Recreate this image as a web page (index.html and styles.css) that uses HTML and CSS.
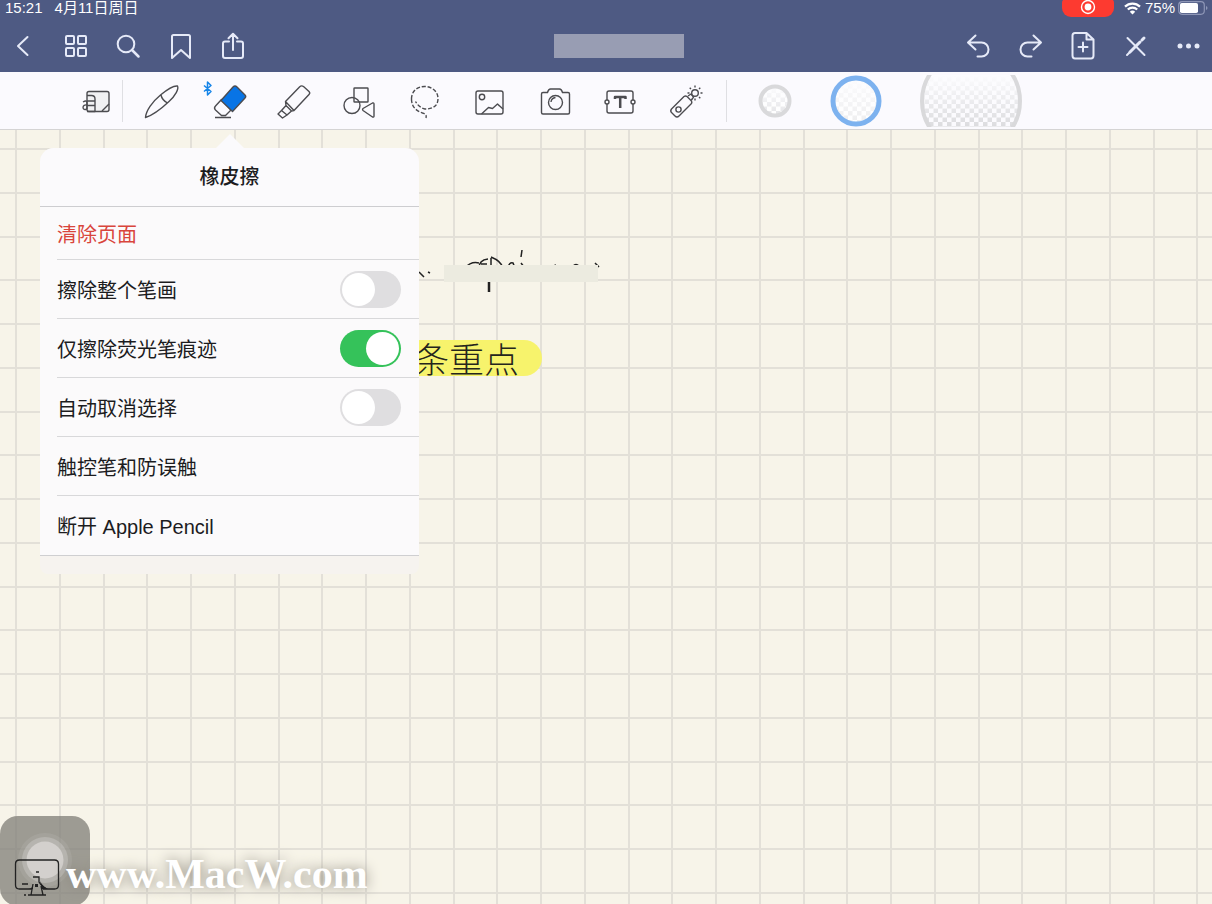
FILE: index.html
```html
<!DOCTYPE html>
<html lang="zh-CN">
<head>
<meta charset="utf-8">
<meta name="viewport" content="width=device-width, initial-scale=1">
<title>笔记</title>
<link rel="stylesheet" href="styles.css">
</head>
<body>
<div class="app">
  <header class="header">
    <div class="status">
      <span>15:21</span>
      <span class="date">4月11日周日</span>
      <span class="rec"><svg width="16" height="16" viewBox="0 0 16 16"><circle cx="8" cy="8" r="6.5" fill="none" stroke="#fff" stroke-width="1.4"/><circle cx="8" cy="8" r="3.4" fill="#fff"/></svg></span>
      <svg width="17" height="13" viewBox="0 0 17 13" fill="none" stroke="#fff" stroke-width="2.2"><path d="M1 4.6a10.7 10.7 0 0 1 15 0M3.8 7.5a6.7 6.7 0 0 1 9.4 0"/><path d="M8.500 12.500L5.800 9.800a3.900 3.900 0 0 1 5.400 0z" fill="#fff" stroke="none"/></svg>
      <span class="pct">75%</span>
      <svg width="30" height="14" viewBox="0 0 30 14"><rect x=".7" y=".7" width="25.600" height="12.600" rx="3.500" fill="none" stroke="#8e96b6" stroke-width="1.200"/><rect x="2" y="2" width="18" height="10" rx="1.800" fill="#fff"/><path d="M28 5v4q1.500-.6 1.500-2T28 5" fill="#8e96b6"/></svg>
    </div>
    <nav class="nav">
      <div class="group">
        <button class="btn" aria-label="返回"><svg class="ic" viewBox="0 0 32 32"><path d="M20.500 7L11 16l9.500 9"/></svg></button>
        <button class="btn" aria-label="缩略图"><svg class="ic" viewBox="0 0 32 32"><rect x="6" y="6" width="8" height="8" rx="1"/><rect x="18" y="6" width="8" height="8" rx="1"/><rect x="6" y="18" width="8" height="8" rx="1"/><rect x="18" y="18" width="8" height="8" rx="1"/></svg></button>
        <button class="btn" aria-label="搜索"><svg class="ic" viewBox="0 0 32 32"><circle cx="14" cy="14" r="8.300"/><path d="M20 20l6.500 6.500" stroke-width="2.500"/></svg></button>
        <button class="btn" aria-label="书签"><svg class="ic" viewBox="0 0 32 32"><path d="M7 28V6.500q0-1.500 1.500-1.500h15q1.500 0 1.500 1.500V28l-9-8z"/></svg></button>
        <button class="btn" aria-label="分享"><svg class="ic" viewBox="0 0 32 32"><path d="M12 11.500H8q-2 0-2 2V26q0 2 2 2h16q2 0 2-2V13.500q0-2-2-2h-4M16 20V4M11.500 8.200L16 3.700l4.500 4.500"/></svg></button>
      </div>
      <div class="title-area"><div class="title"></div></div>
      <div class="group">
        <button class="btn" aria-label="撤销"><svg class="ic" viewBox="0 0 32 32"><path d="M13.500 5.500L6 12.500l7.500 7M6.500 12.500h13a7 7 0 0 1 0 14h-4"/></svg></button>
        <button class="btn" aria-label="重做"><svg class="ic" viewBox="0 0 32 32"><path d="M18.500 5.500l7.500 7-7.500 7M25.500 12.500h-13a7 7 0 0 0 0 14h4"/></svg></button>
        <button class="btn" aria-label="添加页面"><svg class="ic" viewBox="0 0 32 32"><path d="M19.500 3H8Q5.500 3 5.500 5.500v20Q5.500 28.500 8 28.500h16q2.500 0 2.500-3V9.500zM19.500 3v6.500h7M16 12.500v9M11.500 17h9"/></svg></button>
        <button class="btn" aria-label="只读模式"><svg class="ic" viewBox="0 0 32 32"><path d="M7.500 8l17 17"/><path d="M10 22L20 12M22 10l2-2" stroke-width="3"/><path d="M7 25l3-3"/></svg></button>
        <button class="btn" aria-label="更多"><svg class="ic dots" viewBox="0 0 32 32"><circle cx="8" cy="16" r="2.500"/><circle cx="16.500" cy="16" r="2.500"/><circle cx="25" cy="16" r="2.500"/></svg></button>
      </div>
    </nav>
  </header>

  <div class="toolbar">
    <button class="tool" aria-label="放大窗口"><svg viewBox="0 0 44 44"><rect x="13" y="12.500" width="22" height="20" rx="2" fill="#f1f1f3"/><path d="M13 16.500h4.500q3.500 0 3.500 3.500v12.500h-8M13 22h8M28 32l7-7M9 23q4-2.500 4 1v6M13 26c-5-1-5 5-1.500 4.500 1 0 1.500-1 1.500-2M13 26.500h8"/></svg></button>
    <span class="sep"></span>
    <div class="tools">
      <button class="tool" aria-label="钢笔"><svg viewBox="0 0 44 44"><path d="M5.500 38.500C6 32 12 23 20.500 16c6-5 13-9.500 17-9 1.500 3-2 9.500-8.500 15.500C21 30 12 36.500 5.500 38.500zM21 16q1 5 6.500 8"/></svg></button>
      <button class="tool" aria-label="橡皮擦"><svg viewBox="0 0 44 44"><path d="M15.500 20.500l-6 6.500q-2 2 0 4l6 5.500h4l5.500-5.500zM9 38.500h16"/><path d="M27 8q2-2 4 0l8 8q1.500 1.500 0 3L26.500 32.500 15 21.500z" fill="#0874e5"/><path d="M-2 6.500l7 6-3.500 3.500V3L5 6.500-2 12.500" stroke="#1685e8" stroke-width="1.500"/></svg></button>
      <button class="tool" aria-label="荧光笔"><svg viewBox="0 0 44 44"><path d="M32.500 7.500l5.500 5q1.500 1.500 0 3L23 31.500l-8.500-9L28.500 8q2-2 4-.5zM14.500 22.500l.5 4-4.500 5 5.500 4.500 4.500-4 2.500-.5M10.500 31.500L7 35l4.500 4 4.500-3M15 26.500l5.500 5.500"/></svg></button>
      <button class="tool" aria-label="形状"><svg viewBox="0 0 44 44"><rect x="17" y="9" width="14" height="14" rx=".6"/><circle cx="15" cy="26.500" r="8"/><path d="M37 25v12q0 1.500-1.500 1L26 31.500q-1-1 0-2L35.500 24q1.500-.5 1.500 1z"/></svg></button>
      <button class="tool" aria-label="套索"><svg viewBox="0 0 44 44" stroke-dasharray="4 1.800"><path d="M8.500 20C8.500 12 14.500 7.500 21.500 7.500S35 12 35 19.500 30 30 22 30Q16 28.500 12.500 22.500M8.500 20c0 8 5 12 11 14 4 1 4 3 3.500 5"/></svg></button>
      <button class="tool" aria-label="图片"><svg viewBox="0 0 44 44"><rect x="8" y="12" width="27" height="23" rx="2"/><circle cx="14" cy="18" r="2.700"/><path d="M13.500 35l7-6.500 4 1 5-4.500 2 2M29.500 25l5.500 5"/></svg></button>
      <button class="tool" aria-label="相机"><svg viewBox="0 0 44 44"><path d="M9 13.500h4.500q1-3.500 3-3.500h9q2 0 3 3.500H34q1.500 0 1.500 1.500v18.500q0 1.500-1.500 1.500H9q-1.500 0-1.500-1.500V15q0-1.500 1.500-1.500z"/><circle cx="21.500" cy="23.500" r="7"/><path d="M17 23q.5-4 4.500-4.500"/></svg></button>
      <button class="tool" aria-label="文本"><svg viewBox="0 0 44 44"><path d="M8 21v-7q0-2 2-2h22q2 0 2 2v7M8 25v7q0 2 2 2h22q2 0 2-2v-7"/><circle cx="8" cy="23" r="2"/><circle cx="34" cy="23" r="2"/><path d="M16 20v-2h10.500v2M21.200 18v11" stroke-width="2.500"/></svg></button>
      <button class="tool" aria-label="激光笔"><svg viewBox="0 0 44 44"><path d="M19 17.500q1.500-1 3 0l4 4q1.500 1.500.5 3L14 37q-2 2-4 0l-3.500-3.500q-1.500-1.500 0-3.500zM23 17l3-2 2.500 3-2 3"/><circle cx="13.500" cy="30.500" r="2.600"/><circle cx="30" cy="14" r="3.300"/><path d="M30 6.500v2M30 19.500v2M22.500 14h2M35.500 14h2M24.700 8.700l1.300 1.300M34 18l1.300 1.300M34 10l1.300-1.300"/></svg></button>
    </div>
    <span class="sep"></span>
    <div class="sizes">
      <button class="size" aria-label="小号橡皮擦"><svg width="34" height="34" viewBox="0 0 34 34">
        <defs><pattern id="checks" width="9" height="9" patternUnits="userSpaceOnUse"><rect width="4.500" height="4.500" fill="#d9d9dc"/><rect x="4.500" y="4.500" width="4.500" height="4.500" fill="#d9d9dc"/></pattern>
        <linearGradient id="fade" x1="0" y1="0" x2="0" y2="1"><stop offset="0" stop-color="#fcfcfe"/><stop offset="1" stop-color="#fcfcfe" stop-opacity="0"/></linearGradient></defs>
        <circle cx="17" cy="17" r="14.500" fill="#fff"/><circle cx="17" cy="17" r="14.500" fill="url(#checks)" opacity=".7"/><circle cx="17" cy="17" r="14.500" fill="url(#fade)" stroke="#d9d9db" stroke-width="4"/></svg></button>
      <button class="size" aria-label="中号橡皮擦"><svg width="52" height="52" viewBox="0 0 52 52"><circle cx="26" cy="26" r="23" fill="#fff"/><circle cx="26" cy="26" r="23" fill="url(#checks)" opacity=".45"/><circle cx="26" cy="26" r="23" fill="url(#fade)" stroke="#7db2ef" stroke-width="5"/></svg></button>
      <button class="size" aria-label="大号橡皮擦"><svg width="102" height="52" viewBox="0 25 102 52"><circle cx="51" cy="51" r="49" fill="url(#checks)"/><rect x="3" y="25" width="96" height="56" fill="url(#fade)"/><circle cx="51" cy="51" r="49" fill="none" stroke="#d9d9db" stroke-width="4"/></svg></button>
    </div>
  </div>

  <main class="paper">
    <svg class="grid" width="100%" height="100%">
      <defs><pattern id="squares" x="15" y="18" width="175" height="175" patternUnits="userSpaceOnUse"><path d="M1 0v175M45 0v175M89 0v175M132 0v175M0 1h175M0 45h175M0 89h175M0 132h175" stroke="#e3e0d8" stroke-width="2"/></pattern></defs>
      <rect width="100%" height="100%" fill="url(#squares)"/>
    </svg>
    <svg class="scribble" width="190" height="50" viewBox="0 0 190 50" fill="none" stroke="#222" stroke-width="1.500">
      <path d="M4 24l5 5M13 24l2 1M50 20q6-7 14-5M64 20q0-8 9-9M66 16h6M76 10v9M76 9q10 4 12 11M93 20q1-6 5-5l2 5M107 2l-1 7M106 15l3 4M136 19l5-2M158 18q3-3 6 0M180 15l4 4"/>
      <path d="M74 34v10" stroke-width="2.500"/><rect x="29" y="17" width="154" height="17" fill="#ecebe0" stroke="none"/>
    </svg>
    <div class="marked">条重点</div>

    <section class="popover">
      <h1 class="pop-title">橡皮擦</h1>
      <div class="rows">
        <button class="row danger">清除页面</button>
        <label class="row"><span>擦除整个笔画</span><input class="switch" type="checkbox"></label>
        <label class="row"><span>仅擦除荧光笔痕迹</span><input class="switch" type="checkbox" checked></label>
        <label class="row"><span>自动取消选择</span><input class="switch" type="checkbox"></label>
        <button class="row">触控笔和防误触</button>
        <button class="row">断开 Apple Pencil</button>
      </div>
    </section>

    <div class="corner">
      <svg class="assist" width="90" height="90" viewBox="0 0 90 90"><rect width="90" height="90" rx="18" fill="#817e78" fill-opacity=".76"/><circle cx="45" cy="44" r="27" fill="#fff" opacity=".08"/><circle cx="45" cy="44" r="23" fill="#fff" opacity=".2"/><circle cx="45" cy="44" r="18.500" fill="#d3d0cd"/>
      <g fill="none" stroke="#222" stroke-width="1.300"><path d="M32 73H19.500q-4 0-4-4V48q0-4 4-4h35q4 0 4 4v21q0 4-4 4H43M33 61h6v5q3 5 8 7M33 68l-2 11M41 70l2 9M28 79h18M24 79h2M22 68h6M36 56h3"/></g><path d="M39 61q1 8 9 12h-6zM28 73q4 0 5-4v4zM35 68h3v3h-3z" fill="#222"/></svg>
      <span class="mark">www.MacW.com</span>
    </div>
  </main>
</div>
</body>
</html>
```
FILE: styles.css
```css
* { box-sizing: border-box; }
body {
  margin: 0;
  font-family: "Liberation Sans", "Noto Sans CJK SC", sans-serif;
  color: #1c1c1e;
}
button {
  border: 0;
  padding: 0;
  background: none;
  font: inherit;
  color: inherit;
}
svg { display: block; flex: none; }
.app {
  display: flex;
  flex-direction: column;
  min-height: 100vh;
}
.header {
  background: #4e5a83;
  color: #fff;
  padding-bottom: 1px;
}
.status {
  display: flex;
  align-items: center;
  height: 16px;
  padding: 0 4px 0 5px;
  font: 15px/16px "Liberation Sans", "Noto Sans CJK SC", sans-serif;
}
.date { margin: 0 auto 0 12px; }
.rec {
  display: flex;
  justify-content: center;
  width: 52px;
  height: 18px;
  margin-right: 10px;
  border-radius: 4px 4px 9px 9px;
  background: #fd3a30;
}
.pct { margin: 0 3px 0 4px; }
.nav { display: flex; align-items: center; height: 55px; padding: 4px 4px 0 3px; }
.group { display: flex; justify-content: space-between; width: 250px; }
.btn { display: flex; justify-content: center; width: 40px; }
.ic {
  width: 32px;
  height: 32px;
  fill: none;
  stroke: #e6eaf8;
  stroke-width: 2;
  stroke-linecap: round;
  stroke-linejoin: round;
}
.dots { fill: #e6eaf8; stroke: none; }
.title-area { flex: 1; padding-left: 26px; }
.title { width: 130px; height: 24px; margin: 0 auto; background: #989db3; }
.toolbar {
  display: flex;
  align-items: center;
  height: 58px;
  padding-left: 74px;
  background: #fbfafe;
  border-bottom: 1px solid #d5d4d4;
}
.tool { width: 44px; height: 44px; flex: none; }
.tool svg {
  overflow: visible;
  fill: none;
  stroke: #4c4c50;
  stroke-width: 1.4px;
  stroke-linejoin: round;
}
.sep { width: 1px; height: 42px; margin: 0 17px 0 4px; background: #dfdfe3; }
.tools { display: flex; justify-content: space-between; width: 569px; }
.tools + .sep { margin: 0 31px 0 17px; }
.sizes { display: flex; align-items: center; gap: 38px; }
.paper {
  position: relative;
  flex: 1;
  min-height: 600px;
  overflow: hidden;
  background: #f7f4e9;
}
.grid { position: absolute; inset: 0; }
.scribble { position: absolute; left: 415px; top: 118px; }
.marked {
  position: absolute;
  left: 400px;
  top: 210px;
  width: 142px;
  padding-left: 14px;
  border-radius: 0 18px 18px 0;
  background: #f7f36c;
  color: #25251c;
  font: 300 35px/36px "Noto Sans CJK SC", sans-serif;
}
.popover {
  position: absolute;
  left: 40px;
  top: 18px;
  width: 379px;
  padding-bottom: 18px;
  border-radius: 14px 14px 8px 8px;
  background: #f6f3ef;
  font-size: 20px;
}
.popover::before {
  content: "";
  position: absolute;
  left: 176px;
  top: -14px;
  border: 14px solid transparent;
  border-top: 0;
  border-bottom-color: #fbfafc;
}
.pop-title {
  margin: 0;
  border-radius: 14px 14px 0 0;
  border-bottom: 1px solid #cdcdd0;
  background: #fbfafc;
  text-align: center;
  font-size: 20px;
  font-weight: 500;
  line-height: 58px;
}
.rows {
  padding-left: 17px;
  background: #fbfafb;
  border-bottom: 1px solid #cfcfd1;
}
.row {
  display: flex;
  align-items: center;
  justify-content: space-between;
  width: 100%;
  height: 59px;
  padding-right: 18px;
  border-bottom: 1px solid #d8d8da;
}
.row:last-child { border-bottom: 0; }
.danger { height: 53px; color: #d9453c; }
.switch {
  appearance: none;
  display: flex;
  width: 61px;
  height: 37px;
  margin: 0;
  padding: 2px;
  border-radius: 19px;
  background: #dfdee0;
}
.switch::before {
  content: "";
  width: 33px;
  height: 33px;
  border-radius: 50%;
  background: #fff;
}
.switch:checked { justify-content: flex-end; background: #35c25a; }
.corner {
  position: absolute;
  left: 0;
  bottom: -2px;
  display: flex;
  align-items: flex-end;
}
.mark {
  position: relative;
  margin-left: -24px;
  padding-bottom: 11px;
  color: #fff;
  font: bold 42px/42px "Liberation Serif", serif;
  text-shadow: 0 0 14px #8a857a;
}
```
